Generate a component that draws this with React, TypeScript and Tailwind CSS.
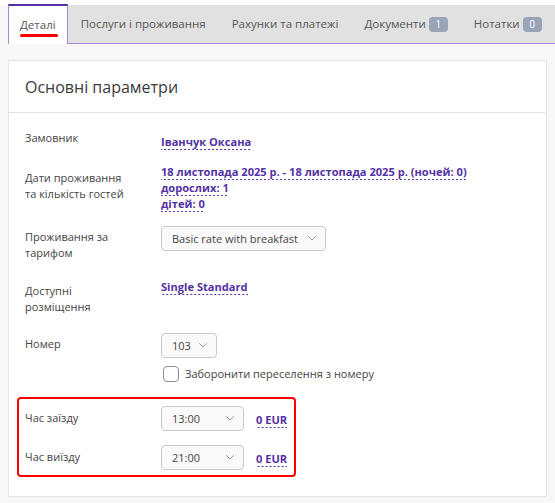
import React from 'react';

const purple = 'text-[#5331a4]';

function Chevron() {
  return (
    <svg width="8" height="5" viewBox="0 0 8 5" fill="none" stroke="#9a9a9a" strokeWidth="1" strokeLinecap="round" strokeLinejoin="round">
      <path d="M0.5 0.5 4 4 7.5 0.5" />
    </svg>
  );
}

function Select({ value, width }: { value: string; width: string }) {
  return (
    <div className={`${width} h-[25px] shrink-0 flex items-center justify-between pl-[10px] pr-[9px] rounded-[4px] border border-[#c9c9c9] bg-[#fafafa] text-[11px] text-[#444] whitespace-nowrap`}>
      <span>{value}</span>
      <Chevron />
    </div>
  );
}

function Dotted({ children }: { children: React.ReactNode }) {
  return (
    <span className={`inline-block font-bold ${purple} text-[11.1px] leading-[15px] pb-[1px] whitespace-nowrap bg-[linear-gradient(to_right,#5331a4_50%,transparent_50%)] bg-[length:4px_1px] bg-repeat-x bg-bottom`}>
      {children}
    </span>
  );
}

function Tab({ label, badge }: { label: string; badge?: number }) {
  return (
    <div className="flex items-center px-[13px] text-[11.5px] text-[#555] whitespace-nowrap">
      <span>{label}</span>
      {badge !== undefined && (
        <span className="ml-[3px] w-[19px] h-[15px] flex items-center justify-center rounded-[4px] bg-[#9aa4b7] text-white text-[10px] leading-none">
          {badge}
        </span>
      )}
    </div>
  );
}

function Label({ children, pt }: { children: React.ReactNode; pt: string }) {
  return <div className={`w-[136px] shrink-0 pr-[30px] ${pt}`}>{children}</div>;
}

export default function App() {
  return (
    <div className="min-h-screen bg-[#f8f8f8] font-['Open_Sans',sans-serif] text-[#444]">
      {/* Tabs */}
      <div className="ml-2 mt-[5px] h-[39px] flex bg-[#e1e1e1] border-b border-[#a28bd6]">
        <div className="relative -mt-px -mb-px flex items-center px-[11px] bg-white border-t-2 border-t-[#5331a4] border-x border-x-[#a28bd6] text-[11.5px] text-[#555]">
          <span>Деталі</span>
          <span className="absolute left-[11px] w-[38px] top-[28px] h-[3px] rounded-full bg-[#ff0000]" />
        </div>
        <Tab label="Послуги і проживання" />
        <Tab label="Рахунки та платежі" />
        <Tab label="Документи" badge={1} />
        <Tab label="Нотатки" badge={0} />
      </div>

      {/* Card */}
      <div className="mx-2 mt-4 bg-white border border-[#e3e3e3]">
        <div className="h-[52px] px-4 flex items-center border-b border-[#e3e3e3] text-[16px] text-[#3a3a3a]">
          Основні параметри
        </div>

        <div className="px-4 pt-[17px] pb-[19px] text-[11px] leading-[16px]">
          {/* Замовник */}
          <div className="flex">
            <Label pt="pt-0">Замовник</Label>
            <div className="pt-[4px]">
              <Dotted>Іванчук Оксана</Dotted>
            </div>
          </div>

          {/* Дати */}
          <div className="flex mt-[14px]">
            <Label pt="pt-[6px]">Дати проживання та кількість гостей</Label>
            <div className="flex flex-col items-start">
              <Dotted>18 листопада 2025 р. - 18 листопада 2025 р. (ночей: 0)</Dotted>
              <Dotted>дорослих: 1</Dotted>
              <Dotted>дітей: 0</Dotted>
            </div>
          </div>

          {/* Тариф */}
          <div className="flex mt-[14px]">
            <Label pt="pt-[3px]">Проживання за тарифом</Label>
            <Select value="Basic rate with breakfast" width="w-[165px]" />
          </div>

          {/* Розміщення */}
          <div className="flex mt-[18px]">
            <Label pt="pt-[4px]">Доступні розміщення</Label>
            <div>
              <Dotted>Single Standard</Dotted>
            </div>
          </div>

          {/* Номер */}
          <div className="flex mt-[18px]">
            <Label pt="pt-[3px]">Номер</Label>
            <div className="flex flex-col items-start">
              <Select value="103" width="w-[56px]" />
              <label className="mt-2 ml-[2px] flex items-center gap-[6px]">
                <span className="w-4 h-4 rounded-[4px] border border-[#8f8f8f] bg-white" />
                <span>Заборонити переселення з номеру</span>
              </label>
            </div>
          </div>

          {/* Час */}
          <div className="mt-[15px] -ml-2 w-[279px] border-2 border-[#ff0000] rounded-[4px] pl-[6px] pt-[7px] pb-[5px]">
            <div className="flex">
              <Label pt="pt-[4px]">Час заїзду</Label>
              <Select value="13:00" width="w-[83px]" />
              <div className="ml-3 pt-[6px]">
                <Dotted>0 EUR</Dotted>
              </div>
            </div>
            <div className="flex mt-[14px]">
              <Label pt="pt-[4px]">Час виїзду</Label>
              <Select value="21:00" width="w-[83px]" />
              <div className="ml-3 pt-[6px]">
                <Dotted>0 EUR</Dotted>
              </div>
            </div>
          </div>
        </div>
      </div>
    </div>
  );
}
